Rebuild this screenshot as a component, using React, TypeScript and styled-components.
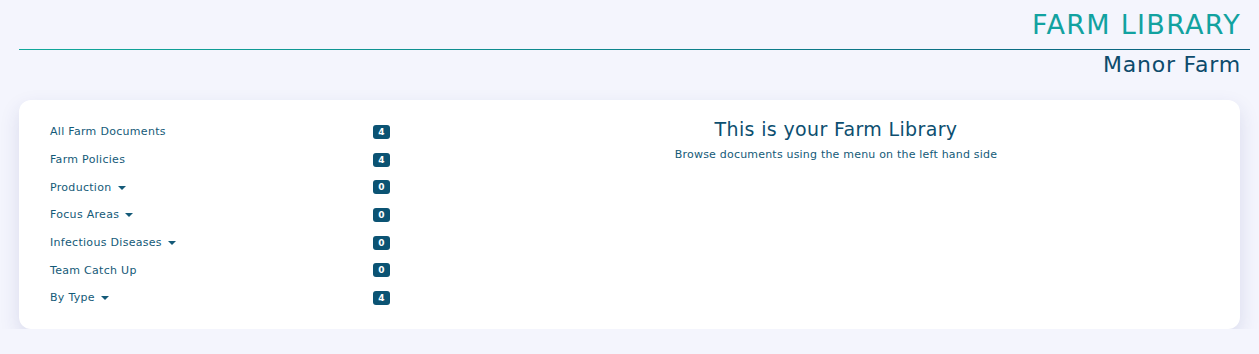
import React from 'react'
import styled, { createGlobalStyle } from 'styled-components'

const GlobalStyle = createGlobalStyle`
  html, body {
    margin: 0;
    padding: 0;
    background: #f4f5fd;
    font-family: 'DejaVu Sans', 'Liberation Sans', sans-serif;
  }
`

const Page = styled.div`
  padding: 0 9px 0 19px;
`

const Header = styled.header`
  display: flex;
  flex-direction: column;
  align-items: flex-end;
`

const Title = styled.h1`
  margin: 8px 9px 0 0;
  font-size: 27px;
  font-weight: 400;
  letter-spacing: 1.3px;
  color: #12a2a0;
  line-height: 33px;
`

const Rule = styled.div`
  align-self: stretch;
  height: 1px;
  margin-top: 8px;
  background: linear-gradient(90deg, #10a89a, #0a5f7e);
`

const Subtitle = styled.h2`
  margin: 1px 9px 0 0;
  font-size: 22px;
  font-weight: 400;
  letter-spacing: 0.8px;
  color: #0d4b6c;
  line-height: 27px;
`

const Card = styled.section`
  margin: 22px 10px 0 0;
  background: #fff;
  border-radius: 12px;
  box-shadow: 0 8px 20px rgba(40, 50, 120, 0.13);
  padding: 18px 31px 17px 31px;
  display: grid;
  grid-template-columns: 340px 1fr;
  gap: 73px;
`

const Menu = styled.ul`
  list-style: none;
  margin: 0;
  padding: 0;
`

const Item = styled.li`
  display: flex;
  align-items: center;
  justify-content: space-between;
  height: 27.7px;
  font-size: 11px;
  letter-spacing: 0.3px;
  color: #145a78;
`

const Label = styled.span`
  display: flex;
  align-items: center;
  gap: 6px;
`

const Caret = styled.span`
  width: 0;
  height: 0;
  border-left: 4px solid transparent;
  border-right: 4px solid transparent;
  border-top: 4px solid #145a78;
  margin-top: 1px;
`

const Badge = styled.span`
  min-width: 17px;
  height: 14px;
  box-sizing: border-box;
  padding: 0 5px;
  border-radius: 3px;
  background: #0b5373;
  color: #fff;
  font-size: 9px;
  font-weight: 600;
  letter-spacing: 0;
  line-height: 14px;
  text-align: center;
`

const Intro = styled.div`
  text-align: center;
  margin-top: -1px;
`

const IntroTitle = styled.h3`
  margin: 0;
  font-size: 19px;
  font-weight: 400;
  letter-spacing: 0.35px;
  color: #0d4f70;
  line-height: 24px;
`

const IntroText = styled.p`
  margin: 7px 0 0;
  font-size: 11px;
  letter-spacing: 0.2px;
  color: #145a78;
`

const items = [
  { label: 'All Farm Documents', count: 4 },
  { label: 'Farm Policies', count: 4 },
  { label: 'Production', count: 0, caret: true },
  { label: 'Focus Areas', count: 0, caret: true },
  { label: 'Infectious Diseases', count: 0, caret: true },
  { label: 'Team Catch Up', count: 0 },
  { label: 'By Type', count: 4, caret: true },
]

const App = () => (
  <>
    <GlobalStyle />
    <Page>
      <Header>
        <Title>FARM LIBRARY</Title>
        <Rule />
        <Subtitle>Manor Farm</Subtitle>
      </Header>
      <Card>
        <Menu>
          {items.map(item => (
            <Item key={item.label}>
              <Label>
                {item.label}
                {item.caret && <Caret />}
              </Label>
              <Badge>{item.count}</Badge>
            </Item>
          ))}
        </Menu>
        <Intro>
          <IntroTitle>This is your Farm Library</IntroTitle>
          <IntroText>Browse documents using the menu on the left hand side</IntroText>
        </Intro>
      </Card>
    </Page>
  </>
)

export default App
